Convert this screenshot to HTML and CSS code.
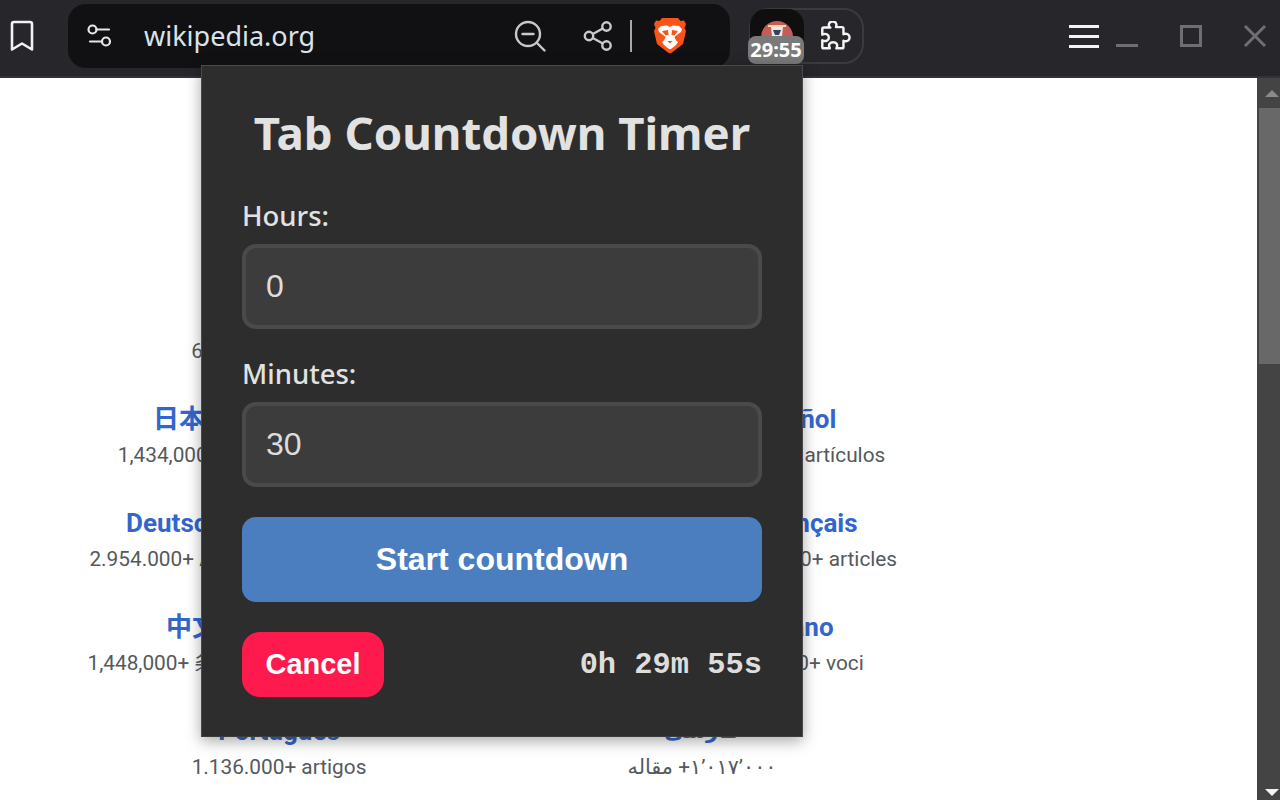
FILE: index.html
```html
<!DOCTYPE html>
<html lang="en">
<head>
  <meta charset="UTF-8" />
  <meta name="viewport" content="width=device-width, initial-scale=1.0"/>
  <title>Tab Countdown Timer</title>
  <link rel="stylesheet" href="styles.css">
</head>
<body>
  <header class="toolbar">
    <svg class="icon-bookmark" width="24" height="32" viewBox="0 0 24 32" fill="none" stroke="#f2f2f2" stroke-width="2.6" stroke-linejoin="round">
      <path d="M4 2h16a2 2 0 0 1 2 2v25.500l-10-6-10 6V4a2 2 0 0 1 2-2z"/>
    </svg>

    <div class="url-bar">
      <svg class="icon-filter" width="26" height="26" viewBox="0 0 26 26" fill="none" stroke="#e6e6e6" stroke-width="2.200" stroke-linecap="round">
        <circle cx="5.500" cy="6.500" r="4"/>
        <path d="M9.500 6.500h12.500"/>
        <circle cx="19" cy="18.500" r="4"/>
        <path d="M3 18.500h12"/>
      </svg>
      <span class="url-text">wikipedia.org</span>
      <svg class="icon-zoom" width="32" height="32" viewBox="0 0 32 32" fill="none" stroke="#c9c9c9" stroke-width="2.400" stroke-linecap="round">
        <circle cx="14" cy="14" r="12"/>
        <path d="M8.500 14h11"/>
        <path d="M23 23l7.500 7.500"/>
      </svg>
      <svg class="icon-share" width="30" height="30" viewBox="0 0 30 30" fill="none" stroke="#c9c9c9" stroke-width="2.400">
        <circle cx="6" cy="15" r="4.200"/>
        <circle cx="23.500" cy="5.500" r="4.200"/>
        <circle cx="23.500" cy="24.500" r="4.200"/>
        <path d="M9.800 13l10-5.500M9.800 17l10 5.500"/>
      </svg>
      <span class="url-divider"></span>
      <svg class="icon-brave" width="32" height="36" viewBox="0 0 32 36">
        <path fill="#fb5418" d="M8 0H24L26.500 3L30 2.500L32 6L30.500 10L32 13L29 26L18 34.500Q16 36 14 34.500L3 26L0 13L1.500 10L0 6L2 2.500L5.500 3Z"/>
        <path fill="#fff" d="M7 8L13 7.500L16 9L19 7.500L25 8L28 11L27 14L21.500 18L20.500 19L22 22.500L24 24L22 27L17 31H15L10 27L8 24L10 22.500L11.500 19L10.500 18L5 14L4 11Z"/>
        <path fill="#fb5418" d="M8 13L14 12L14.500 17L11.500 17.500ZM24 13L18 12L17.500 17L20.500 17.500ZM13.500 23H18.500L16 25.500Z"/>
      </svg>
    </div>

    <div class="ext-group">
      <div class="ext-timer">
        <svg class="icon-hourglass" width="54" height="28" viewBox="0 0 54 28">
          <circle cx="27" cy="28" r="16" fill="#c45c5c"/>
          <rect x="18" y="16" width="18" height="2" fill="#f0d9a8"/>
          <path fill="#e8e8e8" d="M21 18h12l-1 9h-10z"/>
          <path fill="#33445a" d="M23 21h8l-2 5h-4z"/>
        </svg>
        <span class="ext-badge">29:55</span>
      </div>
      <svg class="icon-puzzle" width="32" height="32" viewBox="0 0 34 34" fill="none" stroke="#f4f4f4" stroke-width="2.600" stroke-linejoin="round">
        <path d="M12 7h-7a1.500 1.500 0 0 0-1.500 1.500v6c4-2 7 0 7 3s-3 5-7 3v7a1.500 1.500 0 0 0 1.500 1.500h6.500c-2-4 0-6.500 3.500-6.500s5.500 2.500 3.500 6.500h6a1.500 1.500 0 0 0 1.500-1.500v-6.500c3.500 1.500 6.500-.5 6.500-3.500s-3-5-6.500-3.500v-6a1.500 1.500 0 0 0-1.500-1.500h-6.500c1.500-3.500-.5-6-3.500-6s-5 2.500-3.500 6z"/>
      </svg>
    </div>

    <div class="menu-lines"><span></span><span></span><span></span></div>

    <div class="window-controls">
      <span class="win-min"></span>
      <span class="win-max"></span>
      <svg class="win-close" width="24" height="24" viewBox="0 0 24 24" stroke="#6f6f72" stroke-width="3">
        <path d="M2 2l20 20M22 2L2 22"/>
      </svg>
    </div>
  </header>

  <div class="page">
    <main class="wiki">
      <div class="lang-row">
        <div class="lang lang-en"><a>English</a><p>6,983,000+ articles</p></div>
        <div class="lang lang-ru"><a>Русский</a><p>2,045,000+ статей</p></div>
      </div>
      <div class="lang-row">
        <div class="lang lang-ja"><a>日本語</a><p>1,434,000+ 記事</p></div>
        <div class="lang lang-es"><a>Español</a><p>2.025.000+ artículos</p></div>
      </div>
      <div class="lang-row">
        <div class="lang lang-de"><a>Deutsch</a><p>2.954.000+ Artikel</p></div>
        <div class="lang lang-fr"><a>Français</a><p>2.672.000+ articles</p></div>
      </div>
      <div class="lang-row">
        <div class="lang lang-zh"><a>中文</a><p>1,448,000+ 条目 / 條目</p></div>
        <div class="lang lang-it"><a>Italiano</a><p>1.920.000+ voci</p></div>
      </div>
      <div class="lang-row">
        <div class="lang lang-pt"><a>Português</a><p>1.136.000+ artigos</p></div>
        <div class="lang lang-fa"><a>فارسی</a><p dir="rtl"><span dir="ltr">+۱’۰۱۷’۰۰۰</span> مقاله</p></div>
      </div>
    </main>

    <div class="scrollbar">
      <span class="arrow-up"></span>
      <span class="thumb"></span>
      <span class="arrow-down"></span>
    </div>
  </div>

  <section class="popup">
    <h1>Tab Countdown Timer</h1>
    <label for="hours">Hours:</label>
    <input id="hours" type="text" value="0">
    <label for="minutes">Minutes:</label>
    <input id="minutes" type="text" value="30">
    <button class="start-button">Start countdown</button>
    <div class="popup-foot">
      <button class="cancel-button">Cancel</button>
      <span class="time-left">0h 29m 55s</span>
    </div>
  </section>
</body>
</html>
```

FILE: styles.css
```css
* {
  box-sizing: border-box;
}
body {
  margin: 0;
  height: 800px;
  overflow: hidden;
  background: #fff;
  font-family: "Roboto", "Noto Sans CJK JP", "DejaVu Sans", sans-serif;
}

/* browser toolbar */
.toolbar {
  display: flex;
  align-items: center;
  height: 78px;
  padding-bottom: 4px;
  background: #26262b;
  border-bottom: 2px solid #323237;
}
.icon-bookmark {
  margin-left: 10px;
  flex: none;
}
.url-bar {
  display: flex;
  align-items: center;
  width: 662px;
  height: 64px;
  margin-left: 34px;
  padding-left: 19px;
  background: #111113;
  border-radius: 18px;
}
.url-text {
  margin-left: 31px;
  padding-bottom: 2px;
  font-family: "Noto Sans", sans-serif;
  font-size: 27px;
  color: #dbe3ea;
}
.icon-zoom {
  margin-left: auto;
}
.icon-share {
  margin-left: 37px;
}
.url-divider {
  width: 2px;
  height: 32px;
  margin-left: 17px;
  background: #a8a8a8;
}
.icon-brave {
  margin-left: 22px;
  margin-right: 44px;
}
.ext-group {
  display: flex;
  align-items: center;
  width: 115px;
  height: 56px;
  margin-left: 19px;
  border: 2px solid #3a3a3f;
  border-radius: 20px;
}
.ext-timer {
  position: relative;
  width: 54px;
  height: 54px;
  margin-left: -1px;
  flex: none;
  background: #0f0f10;
  border-radius: 16px;
}
.icon-hourglass {
  display: block;
}
.ext-badge {
  position: absolute;
  left: -2px;
  top: 27px;
  width: 56px;
  height: 28px;
  background: #7a7a7a;
  border-radius: 8px;
  text-align: center;
  font-family: "Noto Sans", sans-serif;
  font-size: 20px;
  font-weight: 700;
  line-height: 28px;
  color: #fff;
}
.icon-puzzle {
  margin-left: 15px;
  margin-top: 2px;
}
.menu-lines {
  display: flex;
  flex-direction: column;
  gap: 7px;
  width: 30px;
  margin-left: auto;
}
.menu-lines span {
  height: 3px;
  background: #f4f4f4;
}
.window-controls {
  display: flex;
  align-items: center;
  margin-left: 17px;
  margin-right: 13px;
}
.win-min {
  width: 22px;
  height: 3px;
  margin-top: 18px;
  background: #6f6f72;
}
.win-max {
  width: 22px;
  height: 22px;
  margin-left: 42px;
  border: 3px solid #6f6f72;
}
.win-close {
  margin-left: 41px;
}

/* page behind the popup */
.page {
  display: flex;
  height: 722px;
}
.wiki {
  flex: 1;
  padding-top: 220px;
  overflow: hidden;
}
.lang-row {
  display: flex;
  height: 104px;
}
.lang {
  width: 300px;
  flex: none;
  text-align: center;
}
.lang a {
  display: block;
  font-size: 26px;
  font-weight: 700;
  line-height: 34px;
  color: #3366cc;
}
.lang p {
  margin: 2px 0 0;
  font-size: 20.800px;
  line-height: 35px;
  color: #54595d;
}
.lang-en { margin-left: 129px; }
.lang-ru { margin-left: 123px; }
.lang-ja { margin-left: 42px; }
.lang-es { margin-left: 298px; }
.lang-de { margin-left: 24px; }
.lang-fr { margin-left: 334px; }
.lang-zh { margin-left: 42px; }
.lang-it { margin-left: 298px; }
.lang-pt { margin-left: 129px; }
.lang-fa { margin-left: 123px; }
.lang-fa a {
  font-size: 21px;
}

.scrollbar {
  position: relative;
  width: 23px;
  flex: none;
  background: #444;
}
.thumb {
  display: block;
  width: 21px;
  height: 256px;
  margin: 30px 0 0 2px;
  background: #686868;
}
.arrow-up, .arrow-down {
  position: absolute;
  left: 8px;
  width: 0;
  height: 0;
  border-left: 7px solid transparent;
  border-right: 7px solid transparent;
}
.arrow-up {
  top: 12px;
  border-bottom: 7px solid #8a8a8a;
}
.arrow-down {
  top: 711px;
  border-top: 7px solid #f4f4f4;
}

/* extension popup */
.popup {
  position: absolute;
  left: 201px;
  top: 65px;
  display: flex;
  flex-direction: column;
  width: 602px;
  height: 672px;
  padding: 0 40px;
  background: #2d2d2d;
  border: 1px solid #4a4a4e;
  border-bottom-color: #3c3c3c;
  box-shadow: 0 4px 14px rgba(0, 0, 0, 0.35);
  color: #e2e2e2;
}
.popup h1 {
  margin: 33px 0 0;
  font-family: "Noto Sans", sans-serif;
  font-size: 45.600px;
  font-weight: 700;
  line-height: 66px;
  text-align: center;
}
.popup label {
  margin-top: 33px;
  font-family: "Noto Sans", sans-serif;
  font-size: 27.500px;
  font-weight: 500;
  line-height: 36px;
}
.popup input {
  width: 520px;
  height: 85px;
  margin-top: 10px;
  padding: 0 20px;
  background: #3c3c3c;
  border: 4px solid #4a4a4a;
  border-radius: 14px;
  font-family: "Liberation Sans", sans-serif;
  font-size: 32px;
  color: #ddd;
}
.popup input + label {
  margin-top: 27px;
}
.start-button {
  width: 520px;
  height: 85px;
  margin-top: 30px;
  background: #4a7ebf;
  border: none;
  border-radius: 14px;
  font-family: "Liberation Sans", sans-serif;
  font-size: 32px;
  font-weight: 700;
  color: #fff;
}
.popup-foot {
  display: flex;
  align-items: center;
  justify-content: space-between;
  margin-top: 30px;
}
.cancel-button {
  width: 142px;
  height: 65px;
  background: #ff1a4d;
  border: none;
  border-radius: 18px;
  font-family: "Liberation Sans", sans-serif;
  font-size: 29px;
  font-weight: 700;
  color: #fff;
}
.time-left {
  font-family: "Liberation Mono", monospace;
  font-size: 30.400px;
  font-weight: 700;
  color: #ddd;
}
```
